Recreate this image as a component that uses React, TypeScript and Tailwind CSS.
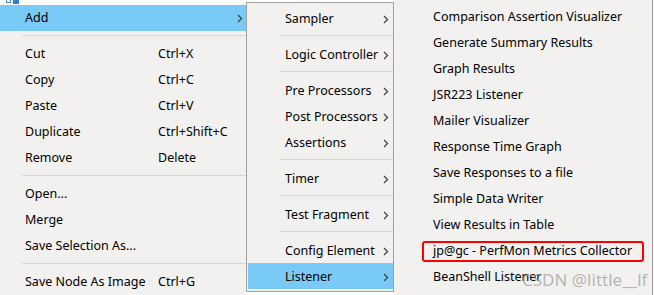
const font = "font-['Noto_Sans','Liberation_Sans',sans-serif]"

type Item = { label: string; shortcut?: string; arrow?: boolean; active?: boolean } | 'sep'

const mainItems: Item[] = [
  { label: 'Add', arrow: true, active: true },
  'sep',
  { label: 'Cut', shortcut: 'Ctrl+X' },
  { label: 'Copy', shortcut: 'Ctrl+C' },
  { label: 'Paste', shortcut: 'Ctrl+V' },
  { label: 'Duplicate', shortcut: 'Ctrl+Shift+C' },
  { label: 'Remove', shortcut: 'Delete' },
  'sep',
  { label: 'Open...' },
  { label: 'Merge' },
  { label: 'Save Selection As...' },
  'sep',
  { label: 'Save Node As Image', shortcut: 'Ctrl+G' },
]

const addItems: Item[] = [
  { label: 'Sampler', arrow: true },
  'sep',
  { label: 'Logic Controller', arrow: true },
  'sep',
  { label: 'Pre Processors', arrow: true },
  { label: 'Post Processors', arrow: true },
  { label: 'Assertions', arrow: true },
  'sep',
  { label: 'Timer', arrow: true },
  'sep',
  { label: 'Test Fragment', arrow: true },
  'sep',
  { label: 'Config Element', arrow: true },
  { label: 'Listener', arrow: true, active: true },
]

const listeners = [
  'Comparison Assertion Visualizer',
  'Generate Summary Results',
  'Graph Results',
  'JSR223 Listener',
  'Mailer Visualizer',
  'Response Time Graph',
  'Save Responses to a file',
  'Simple Data Writer',
  'View Results in Table',
  'jp@gc - PerfMon Metrics Collector',
  'BeanShell Listener',
]

function Chevron() {
  return (
    <svg width="6" height="9" viewBox="0 0 6 9" className="shrink-0">
      <path d="M1 1 L4.5 4.5 L1 8" fill="none" stroke="#444" strokeWidth="1.3" />
    </svg>
  )
}

function Separator({ inset }: { inset: number }) {
  return (
    <div className="h-[10px] pt-[4px]">
      <div className="h-px bg-[#d7d7d7]" style={{ marginLeft: inset }} />
    </div>
  )
}

export default function App() {
  return (
    <div className={`relative flex h-[295px] w-[654px] overflow-hidden bg-white text-[12.5px] text-black ${font}`}>
      {/* Main context menu */}
      <div className="flex w-[246px] shrink-0 flex-col">
        <div className="flex h-[5px] gap-[2px] bg-white pl-[6px]">
          <div className="h-[3px] w-[5px] border border-t-0 border-[#4a8fd0]" />
          <div className="h-[4px] w-[6px] bg-[#2f7fd6]" />
        </div>
        <div className="flex-1 bg-[#f2f1f0]">
          {mainItems.map((it, i) =>
            it === 'sep' ? (
              <Separator key={i} inset={22} />
            ) : (
              <div
                key={i}
                className={`flex h-[26px] items-center pt-px pr-[5px] whitespace-nowrap ${it.active ? 'w-[248px] bg-[#7acaf8]' : ''}`}
              >
                <span className="w-[158px] shrink-0 pl-[25px]">{it.label}</span>
                <span className="flex-1">{it.shortcut}</span>
                {it.arrow && <Chevron />}
              </div>
            ),
          )}
        </div>
      </div>

      {/* Add submenu */}
      <div className="mt-[2px] h-[290px] w-[148px] shrink-0 border border-[#a0a0a0] bg-[#f2f1f0] pt-[2px]">
        {addItems.map((it, i) =>
          it === 'sep' ? (
            <Separator key={i} inset={33} />
          ) : (
            <div
              key={i}
              className={`flex h-[26px] items-center pt-[2px] pr-[4px] ${it.active ? 'ml-px bg-[#7acaf8] pl-[37px]' : 'pl-[38px]'}`}
            >
              <span className="flex-1 whitespace-nowrap">{it.label}</span>
              {it.arrow && <Chevron />}
            </div>
          ),
        )}
      </div>

      {/* Listener submenu */}
      <div className="w-[259px] shrink-0 border-r border-[#a0a0a0] bg-[#f2f1f0] pt-[4px]">
        {listeners.map((l) => (
          <div key={l} className="relative flex h-[26px] items-center pt-px pl-[39px] whitespace-nowrap">
            {l}
            {l.startsWith('jp@gc') && (
              <span className="absolute top-[3px] right-[8px] bottom-[2px] left-[28px] rounded-[3px] border-2 border-[#f00]" />
            )}
          </div>
        ))}
      </div>
      <div className="flex-1 bg-[#f7f7f7]" />

      {/* watermark */}
      <span className="pointer-events-none absolute top-[271px] left-[522px] text-[17px] leading-none whitespace-nowrap text-[#9a9a9a]/70">
        CSDN @little__lf
      </span>
    </div>
  )
}
